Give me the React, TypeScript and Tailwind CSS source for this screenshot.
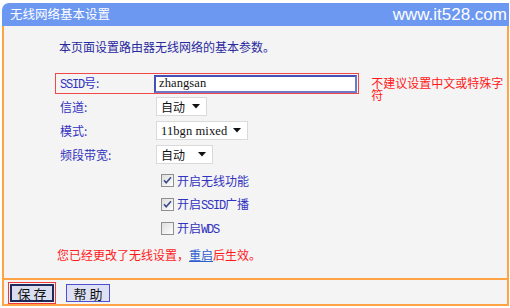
import React from "react";

const cjk = "font-['Noto_Sans_CJK_SC','Noto_Sans',sans-serif]";
const mono = "font-['Liberation_Mono','Noto_Sans_CJK_SC',monospace] text-[12px] tracking-[-1.2px]";
const serif = "font-['Liberation_Serif','Noto_Sans_CJK_SC',serif] text-[12.5px] tracking-[0.1px]";

function Caret() {
  return (
    <svg width="8" height="5" viewBox="0 0 8 5" className="shrink-0">
      <path d="M0 0 L8 0 L4 4.5 Z" fill="#111" />
    </svg>
  );
}

function Select({ width, children }: { width: string; children: React.ReactNode }) {
  return (
    <div className={`${width} h-[19px] bg-white border border-[#dadada] flex items-center justify-between pl-[4px] pr-[6px] text-[12px] text-[#111]`}>
      <span className="leading-none">{children}</span>
      <Caret />
    </div>
  );
}

function Check({ checked }: { checked: boolean }) {
  return (
    <svg width="13" height="13" viewBox="0 0 13 13" className="shrink-0">
      <defs>
        <linearGradient id="cbg" x1="0" y1="0" x2="1" y2="1">
          <stop offset="0" stopColor="#dcdcdc" />
          <stop offset="1" stopColor="#ffffff" />
        </linearGradient>
      </defs>
      <rect x="0.5" y="0.5" width="12" height="12" fill="url(#cbg)" stroke="#8e8f8f" />
      {checked && <path d="M3 6.2 L5.2 8.8 L10 3.2" fill="none" stroke="#3a4a8c" strokeWidth="1.6" />}
    </svg>
  );
}

export default function App() {
  const label = "text-[12px] text-[#3232c0] leading-none";
  return (
    <div className={`w-[510px] h-[308px] bg-white ${cjk} overflow-hidden`}>
      <div className="pt-[3px] ml-[2px] mr-[1px]">
        <div className="h-[23px] bg-[#6c98f2] rounded-tl-[7px] flex items-center justify-between pl-[8px] pr-[2px]">
          <span className="text-white text-[12.5px] leading-none">无线网络基本设置</span>
          <span className="text-white text-[17px] leading-none font-['Liberation_Sans',sans-serif]">www.it528.com</span>
        </div>
        <div className="h-[254px] bg-[#f4f4f4] border-x-2 border-b-2 border-[#ffa445] pt-[13px]">
          <div className="pl-[55px] text-[12px] leading-[16px] text-[#2a2aa0]">本页面设置路由器无线网络的基本参数。</div>
          <div className="pl-[51px] mt-[18px]">
            <div className="flex items-start h-[21px]">
              <div className="w-[305px] h-[21px] border border-[#f24848] flex items-center pl-[4px]">
                <span className={`w-[94px] ${label}`}>
                  <span className={mono}>SSID</span>号:
                </span>
                <div className="w-[203px] h-[18px] bg-white border-2 border-[#4651b4] border-r-[#6f79c8] border-b-[#6f79c8] flex items-center pl-[3px]">
                  <span className={`${serif} text-[#111] leading-none`}>zhangsan</span>
                </div>
              </div>
              <div className="ml-[12px] w-[136px] mt-[4px] text-[12px] leading-[12px] text-[#ff1a1a]">不建议设置中文或特殊字符</div>
            </div>
            <div className="flex flex-col gap-[5px] mt-[3px]">
              <div className="flex items-center h-[19px] pl-[5px]">
                <span className={`w-[96px] ${label}`}>信道:</span>
                <Select width="w-[51px]">自动</Select>
              </div>
              <div className="flex items-center h-[19px] pl-[5px]">
                <span className={`w-[96px] ${label}`}>模式:</span>
                <Select width="w-[92px]"><span className={serif}>11bgn mixed</span></Select>
              </div>
              <div className="flex items-center h-[19px] pl-[5px]">
                <span className={`w-[96px] ${label}`}>频段带宽:</span>
                <Select width="w-[57px]">自动</Select>
              </div>
            </div>
            <div className="flex flex-col gap-[11px] mt-[10px] pl-[106px]">
              <div className="flex items-center h-[13px] gap-[3px]">
                <Check checked />
                <span className={label}>开启无线功能</span>
              </div>
              <div className="flex items-center h-[13px] gap-[3px]">
                <Check checked />
                <span className={label}>开启<span className={mono}>SSID</span>广播</span>
              </div>
              <div className="flex items-center h-[13px] gap-[3px]">
                <Check checked={false} />
                <span className={label}>开启<span className={mono}>WDS</span></span>
              </div>
            </div>
          </div>
          <div className="pl-[53px] mt-[13px] text-[12px] leading-[14px] text-[#ff1a1a]">
            您已经更改了无线设置，<span className="text-[#2f5fd0] underline">重启</span>后生效。
          </div>
        </div>
        <div className="h-[26px] bg-[#f4f4f4] border-x-2 border-b-2 border-[#ffa445] flex items-start pt-[2px] pl-[4px]">
          <div className="w-[48px] h-[22px] border border-[#f03a3a] flex items-center justify-center">
            <div className="w-[44px] h-[18px] bg-[#d9ddef] border-2 border-[#1d2a5e] flex items-center justify-center text-[13px] leading-none text-[#111]">
              保&nbsp;存
            </div>
          </div>
          <div className="ml-[10px] mt-[2px] w-[44px] h-[18px] bg-[#dde1f3] border border-[#4d4fd0] flex items-center justify-center text-[13px] leading-none text-[#111]">
            帮&nbsp;助
          </div>
        </div>
      </div>
    </div>
  );
}
